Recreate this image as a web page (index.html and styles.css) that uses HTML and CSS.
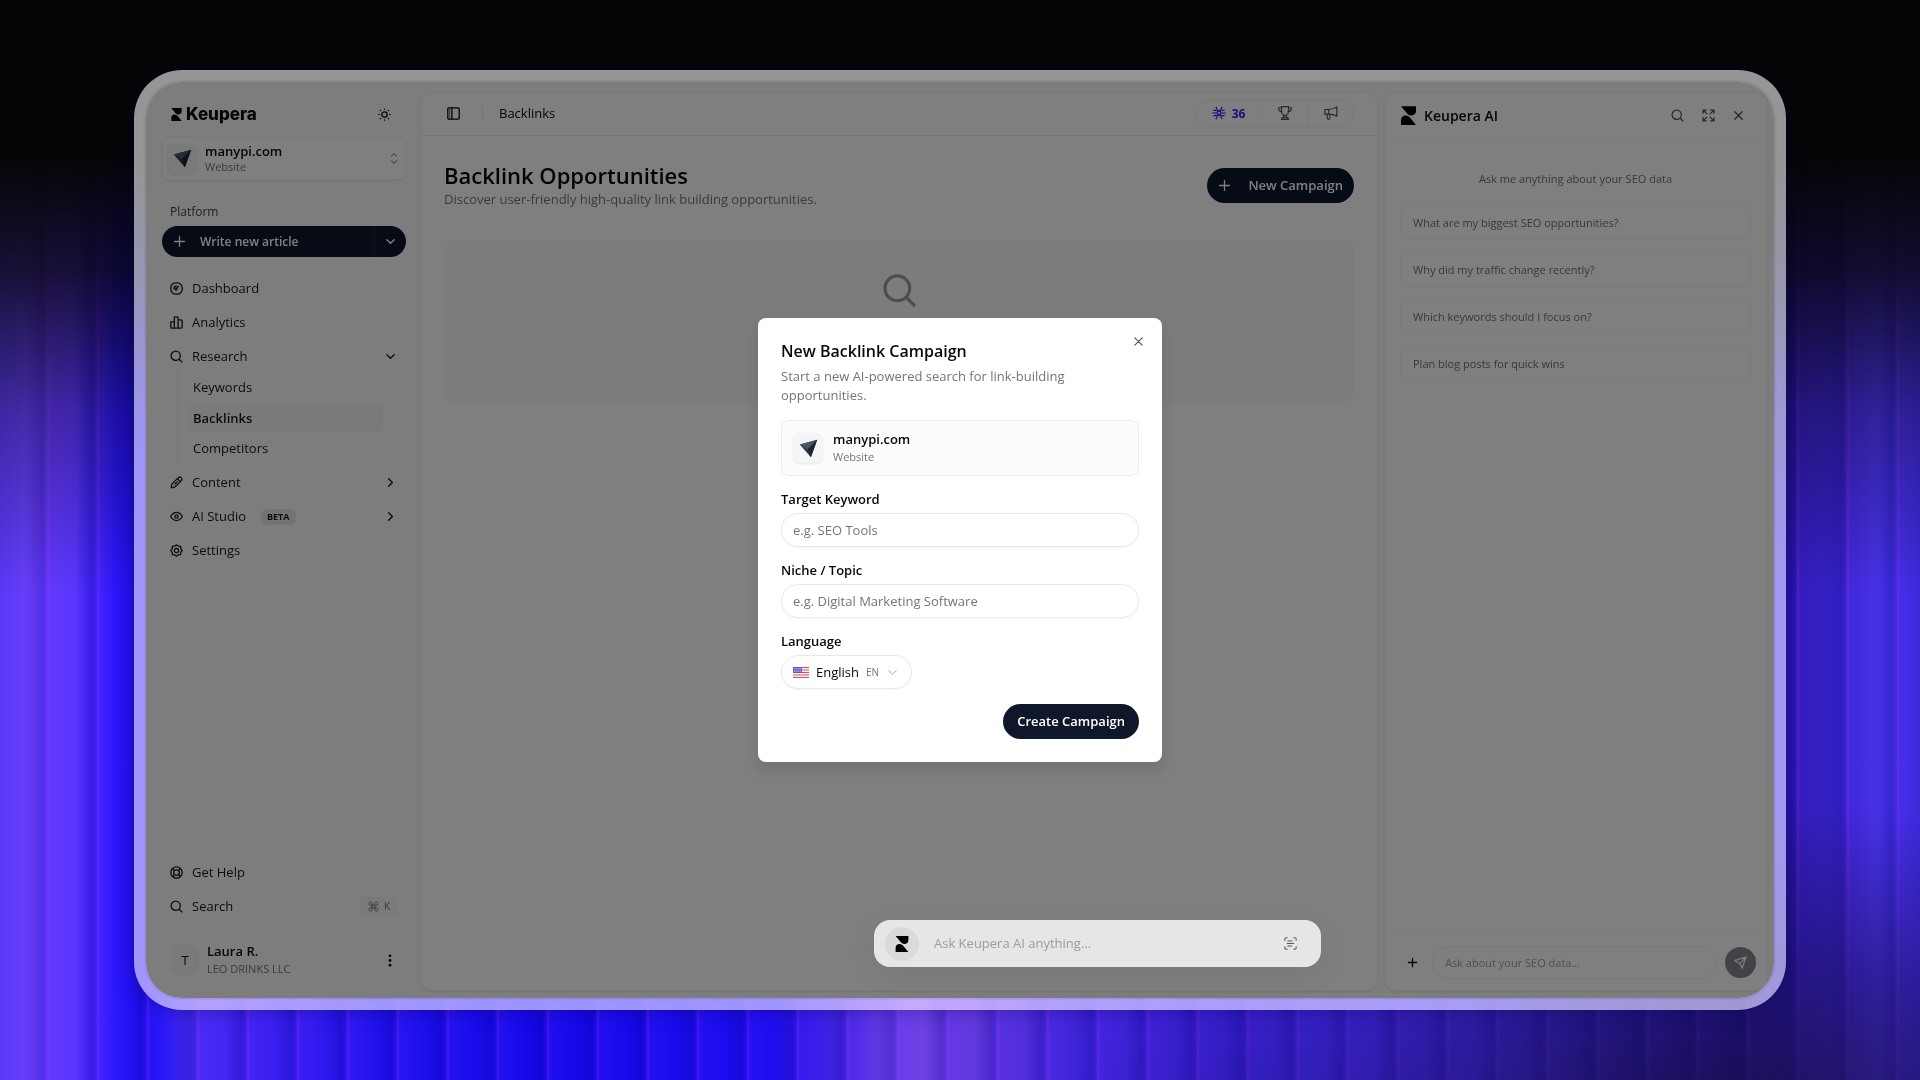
FILE: index.html
```html
<!DOCTYPE html>
<html lang="en">
<head>
    <meta charset="UTF-8">
    <meta name="viewport" content="width=device-width, initial-scale=1">
    <title>Backlinks – Keupera</title>
    <link rel="stylesheet" href="styles.css">
</head>
<body>

    <svg class="sprite" aria-hidden="true">
        <symbol id="mark" viewBox="0 0 16 20"><path d="M0 0H16V5C16 8 14 10 11 10C9 10 7 9 5 6ZM16 20H0V15C0 12 2 10 5 10C7 10 9 11 11 14Z" fill="currentColor"/></symbol>
        <symbol id="search" viewBox="0 0 24 24"><circle cx="10.5" cy="10.5" r="8.5"/><path d="M17 17l5 5"/></symbol>
        <symbol id="plus" viewBox="0 0 24 24"><path d="M12 3v18M3 12h18"/></symbol>
        <symbol id="close" viewBox="0 0 24 24"><path d="M4 4l16 16M20 4L4 20"/></symbol>
        <symbol id="down" viewBox="0 0 24 24"><path d="M4 8l8 8 8-8"/></symbol>
        <symbol id="right" viewBox="0 0 24 24"><path d="M8 4l8 8-8 8"/></symbol>
        <symbol id="plane" viewBox="0 0 24 24"><path d="M1 7L23 1 15 23Z" fill="#2f3a4a"/><path d="M1 7L23 1 11 13Z" fill="#4a5668"/><path d="M11 13L23 1 15 23Z" fill="#1c2533"/></symbol>
    </svg>

    <div class="frame">
        <div class="app">

            <aside class="sidebar">
                <div class="brand-row">
                    <a class="brand" href="#"><svg class="brand-mark"><use href="#mark"/></svg>Keupera</a>
                    <button class="icon-btn" aria-label="Theme">
                        <svg class="icon" viewBox="0 0 24 24"><circle cx="12" cy="12" r="5"/><path d="M12 1.500v.5M12 22v.5M1.500 12h.5M22 12h.5M4.500 4.500l.4.4M19.100 19.100l.4.4M4.500 19.500l.4-.4M19.100 4.900l.4-.4"/></svg>
                    </button>
                </div>

                <button class="site-switch">
                    <span class="site-icon"><svg><use href="#plane"/></svg></span>
                    <span class="site-text"><b>manypi.com</b><small>Website</small></span>
                    <svg class="switch-arrows" viewBox="0 0 24 40"><path d="M4 13l8-8 8 8M4 27l8 8 8-8"/></svg>
                </button>

                <div class="nav-title">Platform</div>
                <div class="write">
                    <button class="write-main"><svg class="icon"><use href="#plus"/></svg>Write new article</button>
                    <button class="write-more" aria-label="More"><svg class="icon-sm"><use href="#down"/></svg></button>
                </div>

                <nav class="nav">
                    <a href="#"><svg class="icon" viewBox="0 0 24 24"><rect x="1.500" y="1.500" width="21" height="21" rx="9"/><circle cx="11" cy="13" r="2"/><path d="M12 12l4-4M7 12a5 5 0 0 1 5-5"/></svg>Dashboard</a>
                    <a href="#"><svg class="icon" viewBox="0 0 24 24"><path d="M1.500 11H8v11.500H3.500q-2 0-2-2zM8 3.500q0-2 2-2h3q2 0 2 2v19H8zM15 7h5.500q2 0 2 2v11.500q0 2-2 2H15z"/></svg>Analytics</a>
                    <div class="nav-group">
                        <a href="#"><svg class="icon"><use href="#search"/></svg>Research<svg class="icon-sm arrow"><use href="#down"/></svg></a>
                        <div class="subnav">
                            <a href="#">Keywords</a>
                            <a class="active" href="#">Backlinks</a>
                            <a href="#">Competitors</a>
                        </div>
                    </div>
                    <a href="#"><svg class="icon" viewBox="0 0 24 24"><path d="M2 22l1.500-7L15 3.500q3-3 5.500-.5t.5 5.500L9.500 20zM13.500 5l5.500 5.500M9 15l4-4"/></svg>Content<svg class="icon-sm arrow"><use href="#right"/></svg></a>
                    <a href="#"><svg class="icon" viewBox="0 0 24 24"><path d="M1 12q5-7.500 11-7.500T23 12q-5 7.500-11 7.500T1 12z"/><circle cx="12" cy="12" r="3"/></svg>AI Studio<span class="badge">BETA</span><svg class="icon-sm arrow"><use href="#right"/></svg></a>
                    <a href="#"><svg class="icon" viewBox="0 0 24 24"><path d="M12 1.500L15.500 4l4 .5.5 4 2.500 3.500L20 15.500l-.5 4-4 .5-3.500 2.500L8.500 20l-4-.5-.5-4L1.500 12 4 8.500l.5-4 4-.5z"/><circle cx="12" cy="12" r="4"/></svg>Settings</a>
                </nav>

                <nav class="nav nav-bottom">
                    <a href="#"><svg class="icon" viewBox="0 0 24 24"><circle cx="12" cy="12" r="10.500"/><rect x="7" y="7" width="10" height="10" rx="4"/><path d="M5 5l3.500 3.500M19 5l-3.500 3.500M5 19l3.500-3.500M19 19l-3.500-3.500"/></svg>Get Help</a>
                    <a href="#"><svg class="icon"><use href="#search"/></svg>Search<kbd><svg viewBox="0 0 24 24"><path d="M9 9h6v6H9zM9 9H5.500A3.500 3.500 0 1 1 9 5.500zM15 9V5.500A3.500 3.500 0 1 1 18.500 9zM9 15v3.500A3.500 3.500 0 1 1 5.500 15zM15 15h3.500a3.500 3.500 0 1 1-3.500 3.500z"/></svg>K</kbd></a>
                </nav>

                <div class="user">
                    <span class="avatar">T</span>
                    <span class="site-text"><b>Laura R.</b><small>LEO DRINKS LLC</small></span>
                    <button class="icon-btn" aria-label="Account menu">
                        <svg class="dots" viewBox="0 0 4 14"><circle cx="2" cy="2" r="1.500"/><circle cx="2" cy="7" r="1.500"/><circle cx="2" cy="12" r="1.500"/></svg>
                    </button>
                </div>
            </aside>

            <main class="panel main">
                <header class="topbar">
                    <button class="icon-btn" aria-label="Toggle sidebar"><svg class="icon" viewBox="0 0 24 24"><rect x="1.500" y="1.500" width="21" height="21" rx="2"/><path d="M9 2v20"/><path d="M5 4v16" stroke-width="1"/></svg></button>
                    <span class="sep"></span>
                    <span class="crumb">Backlinks</span>
                    <div class="stats">
                        <button class="credits"><svg class="icon" viewBox="0 0 24 24"><circle cx="12" cy="12" r="3"/><path d="M12 9V7M12 17v-2M1 12h8M15 12h8M10 9L7 2M14 9l3-7M10 15l-3 7M14 15l3 7M3 7l4 1M21 7l-4 1M3 17l4-1M21 17l-4-1"/></svg>36</button>
                        <button aria-label="Achievements"><svg class="icon" viewBox="0 0 24 24"><path d="M6 1h12v8c0 4-3 7-6 7s-6-3-6-7zM6 3H1c0 5 2 7 6 7M18 3h5c0 5-2 7-6 7M10 16l-1 4M14 16l1 4M6 23c0-2 1-3 3-3h6c2 0 3 1 3 3z"/></svg></button>
                        <button aria-label="News"><svg class="icon" viewBox="0 0 24 24"><path d="M1.500 6H8c5 0 10-2 14-4.500v16C18 15 13 14 8 14H1.500zM8 6v8M5 14l1 7q0 2 2 2t2-2v-7"/></svg></button>
                    </div>
                </header>
                <section class="content">
                    <div class="page-head">
                        <div>
                            <h1>Backlink Opportunities</h1>
                            <p>Discover user-friendly high-quality link building opportunities.</p>
                        </div>
                        <button class="btn"><svg class="icon"><use href="#plus"/></svg>New Campaign</button>
                    </div>
                    <div class="empty"><svg><use href="#search"/></svg></div>
                </section>
            </main>

            <aside class="panel chat">
                <header class="chat-head">
                    <svg class="chat-mark"><use href="#mark"/></svg>
                    <h2>Keupera AI</h2>
                    <button class="icon-btn" aria-label="Search chats"><svg class="icon"><use href="#search"/></svg></button>
                    <button class="icon-btn" aria-label="Expand"><svg class="icon" viewBox="0 0 24 24"><path d="M2 8V2h6M16 2h6v6M22 16v6h-6M8 22H2v-6M3 3l6 6M21 3l-6 6M21 21l-6-6M3 21l6-6"/></svg></button>
                    <button class="icon-btn" aria-label="Close chat"><svg class="icon-sm"><use href="#close"/></svg></button>
                </header>
                <div class="chat-body">
                    <p>Ask me anything about your SEO data</p>
                    <button>What are my biggest SEO opportunities?</button>
                    <button>Why did my traffic change recently?</button>
                    <button>Which keywords should I focus on?</button>
                    <button>Plan blog posts for quick wins</button>
                </div>
                <form class="chat-form">
                    <button type="button" class="icon-btn" aria-label="Attach"><svg class="icon-sm"><use href="#plus"/></svg></button>
                    <input type="text" aria-label="Ask about your SEO data" placeholder="Ask about your SEO data...">
                    <button type="button" class="send" aria-label="Send"><svg class="icon" viewBox="0 0 24 24"><path d="M1.500 8.500L22.500 1.500 15 22.500 11 14zM11 14L22 2"/></svg></button>
                </form>
            </aside>

            <div class="overlay"></div>

            <form class="askbar">
                <span class="ask-logo"><svg><use href="#mark"/></svg></span>
                <input type="text" aria-label="Ask Keupera AI" placeholder="Ask Keupera AI anything...">
                <button type="button" class="icon-btn" aria-label="Scan page"><svg class="icon" viewBox="0 0 24 24"><path d="M1.500 6V4q0-2.500 2.500-2.500h2M18 1.500h2q2.500 0 2.500 2.500v2M22.500 18v2q0 2.500-2.500 2.500h-2M6 22.500H4Q1.500 22.500 1.500 20v-2M7 7.500h8M6 12h12M7 16.500h7"/></svg></button>
            </form>
        </div>
    </div>

    <div class="modal" role="dialog" aria-labelledby="modal-title">
        <button class="icon-btn modal-close" aria-label="Close"><svg class="icon-sm"><use href="#close"/></svg></button>
        <h2 id="modal-title">New Backlink Campaign</h2>
        <p>Start a new AI-powered search for link-building opportunities.</p>

        <div class="site-card">
            <span class="site-icon"><svg><use href="#plane"/></svg></span>
            <span class="site-text"><b>manypi.com</b><small>Website</small></span>
        </div>

        <form class="modal-form">
            <label for="keyword">Target Keyword</label>
            <input type="text" id="keyword" name="keyword" placeholder="e.g. SEO Tools">

            <label for="niche">Niche / Topic</label>
            <input type="text" id="niche" name="niche" placeholder="e.g. Digital Marketing Software">

            <label for="language">Language</label>
            <div class="lang">
                <svg class="flag" viewBox="0 0 16 11"><rect width="16" height="11" fill="#f4f4f8"/><path d="M0 .5h16M0 3h16M0 5.500h16M0 8h16M0 10.500h16" stroke="#e8505b" stroke-width="1.200"/><rect width="9" height="6" fill="#5a5ac8"/><path d="M1 1.500h7M1 3h7M1 4.500h7" stroke="#c8c8f0" stroke-width=".6" stroke-dasharray="1 1"/></svg>
                <select id="language" name="language"><option>English</option></select>
                <small>EN</small>
                <svg class="icon-sm"><use href="#down"/></svg>
            </div>

            <button type="button" class="btn">Create Campaign</button>
        </form>
    </div>

</body>
</html>
```
FILE: styles.css
```css
* {
    box-sizing: border-box;
}

body {
    margin: 0;
    height: 100vh;
    padding: 70px 134px;
    display: flex;
    overflow: hidden;
    font-family: "Open Sans", "Segoe UI", sans-serif;
    font-size: 13px;
    line-height: 19px;
    color: #09090b;
    background:
        linear-gradient(to bottom, #050505 0, #050505 14%, rgba(5, 5, 5, 0.8) 25%, rgba(5, 5, 5, 0.35) 38%, transparent 55%),
        radial-gradient(ellipse 34% 30% at 90% 104%, rgba(24, 14, 60, 0.8) 0, rgba(24, 14, 80, 0.5) 50%, transparent),
        repeating-linear-gradient(to right,
            rgba(80, 40, 255, 0.2) 0, rgba(60, 20, 255, 0) 25px, rgba(10, 0, 150, 0.25) 42px,
            rgba(60, 20, 220, 0.25) 46px, rgba(150, 50, 255, 0.35) 48px, rgba(80, 40, 255, 0.2) 50px),
        linear-gradient(to right, #5c3cf4 0, #6a40ff 2%, #5a34ff 4%, #2a14fa 6%, #1c10f4 8%, #4a2cf4 10%,
            #3c20f0 14%, #2010ee 20%, #1408ec 28%, #1c0cf0 40%, #4a28e4 44%, #7044e6 47%, #6038dc 51%, #4024d8 56%,
            #3a20dc 64%, #4028f4 70%, #402af4 77%, #2c1cc0 84%, #20129a 91%, #3420c0 95%, #4a34ec 98%, #3c2ad8 100%);
}

h1, h2, p {
    margin: 0;
}

a {
    color: inherit;
    text-decoration: none;
}

button, input, select {
    font: inherit;
    color: inherit;
    border: none;
    background: none;
    padding: 0;
    outline: none;
}

button {
    cursor: pointer;
}

svg {
    display: block;
    flex: none;
    fill: none;
    stroke: currentColor;
    stroke-width: 2;
    stroke-linecap: round;
    stroke-linejoin: round;
}

.sprite {
    position: absolute;
    width: 0;
    height: 0;
}

.icon {
    width: 13px;
    height: 13px;
    stroke-width: 2.4;
}

.icon-sm {
    width: 11px;
    height: 11px;
    stroke-width: 3;
}

.icon-btn {
    display: flex;
    align-items: center;
    justify-content: center;
}

/* window */

.frame {
    flex: 1;
    display: flex;
    padding: 12px;
    border-radius: 48px;
    background: rgba(255, 255, 255, 0.58);
    backdrop-filter: blur(8px) saturate(160%);
    box-shadow: 0 0 20px rgba(5, 0, 60, 0.35);
}

.app {
    position: relative;
    flex: 1;
    display: flex;
    gap: 8px;
    padding: 11px 7px 8px 0;
    border-radius: 36px;
    background: #fafafa;
    box-shadow: 0 0 3px rgba(0, 0, 0, 0.25);
    overflow: hidden;
}

.overlay {
    position: absolute;
    inset: 0;
    background: rgba(0, 0, 0, 0.5);
}

.panel {
    display: flex;
    flex-direction: column;
    background: #fff;
    border-radius: 12px;
    box-shadow: 0 0 0 1px #f3f3f5, 0 1px 3px rgba(0, 0, 0, 0.15);
}

/* sidebar */

.sidebar {
    width: 267px;
    display: flex;
    flex-direction: column;
    padding: 11px 7px 13px 16px;
}

.brand-row {
    display: flex;
    align-items: center;
    justify-content: space-between;
    padding: 0 15px 0 9px;
    height: 20px;
}

.brand {
    display: flex;
    align-items: center;
    gap: 4px;
    font-family: Inter, sans-serif;
    font-size: 17px;
    font-weight: 800;
}

.brand-mark {
    width: 11px;
    height: 13px;
    stroke: none;
}

.site-switch {
    display: flex;
    align-items: center;
    gap: 8px;
    height: 43px;
    margin-top: 13px;
    padding: 0 8px 0 5px;
    border-radius: 8px;
    background: #fff;
    box-shadow: inset 0 0 0 1px #f3f3f5, 0 1px 2px rgba(0, 0, 0, 0.08);
    text-align: left;
}

.switch-arrows {
    width: 8px;
    height: 13px;
    stroke-width: 3;
    color: #52525b;
}

.site-icon {
    display: flex;
    align-items: center;
    justify-content: center;
    width: 30px;
    height: 30px;
    border-radius: 8px;
    background: #f4f5f7;
    box-shadow: 0 1px 3px rgba(0, 0, 0, 0.1);
}

.site-icon svg {
    width: 19px;
    height: 19px;
    stroke: none;
}

.site-text {
    flex: 1;
    display: flex;
    flex-direction: column;
    line-height: 16px;
}

.site-text b {
    font-weight: 600;
}

.site-text small {
    font-size: 11px;
    color: #71757f;
}

.nav-title {
    margin-top: 22px;
    padding-left: 8px;
    font-size: 12px;
    font-weight: 500;
    color: #3f3f46;
}

.write {
    display: flex;
    height: 31px;
    margin-top: 5px;
    border-radius: 16px;
    background: #0f172a;
    color: #fff;
}

.write-main {
    flex: 1;
    display: flex;
    align-items: center;
    gap: 14px;
    padding-left: 11px;
    font-size: 12px;
    font-weight: 600;
}

.write-more {
    display: flex;
    align-items: center;
    justify-content: center;
    width: 32px;
    border-left: 1px solid #1d273a;
}

.nav {
    display: flex;
    flex-direction: column;
    gap: 3px;
    margin-top: 16px;
}

.nav a {
    display: flex;
    align-items: center;
    gap: 9px;
    height: 31px;
    padding: 0 10px 0 8px;
    color: #18181b;
}

.arrow {
    margin-left: auto;
}

.subnav {
    margin-left: 15px;
    padding: 0 23px 0 11px;
    border-left: 1px solid #e9e9ee;
}

.nav .subnav a {
    padding: 0 4px;
}

.nav .subnav .active {
    height: 28px;
    margin: 1px 0;
    border-radius: 6px;
    background: #f4f4f5;
    font-weight: 600;
}

.badge {
    margin-left: 6px;
    padding: 0 6px;
    border-radius: 6px;
    background: #e6e6ea;
    font-size: 9px;
    font-weight: 700;
    line-height: 16px;
}

.nav-bottom {
    margin-top: auto;
}

kbd {
    display: flex;
    align-items: center;
    gap: 5px;
    height: 19px;
    margin-left: auto;
    margin-right: -2px;
    padding: 0 8px;
    border-radius: 4px;
    background: #f4f4f5;
    font-family: inherit;
    font-size: 10px;
    color: #71757f;
}

kbd svg {
    width: 11px;
    height: 11px;
}

.user {
    display: flex;
    align-items: center;
    gap: 8px;
    margin-top: 21px;
    padding: 0 14px 0 9px;
}

.user .site-text {
    line-height: 17px;
}

.avatar {
    width: 28px;
    line-height: 30px;
    border-radius: 8px;
    background: #f4f4f5;
    text-align: center;
}

.dots {
    width: 4px;
    height: 13px;
    fill: currentColor;
    stroke: none;
}

/* main */

.main {
    flex: 1;
}

.topbar {
    display: flex;
    align-items: center;
    height: 43px;
    padding: 0 23px 2px 26px;
    border-bottom: 1px solid #ececef;
}

.sep {
    width: 1px;
    height: 14px;
    margin: 0 16px 0 22px;
    background: #e9e9ee;
}

.stats {
    display: flex;
    height: 27px;
    margin-left: auto;
    border: 1px solid #f0f0f3;
    border-radius: 14px;
}

.stats button {
    display: flex;
    align-items: center;
    justify-content: center;
    gap: 6px;
    width: 46px;
    color: #52525b;
}

.stats button + button {
    border-left: 1px solid #f0f0f3;
}

.stats .icon {
    width: 14px;
    height: 14px;
    stroke-width: 2;
}

.stats .credits {
    width: 65px;
    font-size: 12px;
    font-weight: 700;
    color: #3020f0;
}

.content {
    padding: 25px 23px 0 23px;
}

.page-head {
    display: flex;
    align-items: center;
    justify-content: space-between;
    padding-bottom: 31px;
}

.page-head .btn {
    padding: 0 11px;
}

h1 {
    font-size: 22px;
    line-height: 28px;
    font-weight: 600;
}

.page-head p {
    margin-top: 1px;
    color: #71757f;
}

.btn {
    display: flex;
    align-items: center;
    gap: 17px;
    height: 35px;
    padding: 0 12px;
    border-radius: 18px;
    background: #0f172a;
    color: #fff;
    font-weight: 600;
}

.empty {
    display: flex;
    justify-content: center;
    height: 162px;
    padding-top: 33px;
    border-radius: 10px;
    background: #f6faf8;
    color: #9a9aa0;
}

.empty svg {
    width: 35px;
    height: 35px;
    stroke-width: 2.2;
}

/* chat */

.chat {
    width: 382px;
}

.chat-head {
    display: flex;
    align-items: center;
    gap: 18px;
    height: 46px;
    padding: 0 23px 0 16px;
    border-bottom: 1px solid #f7f7f9;
    color: #52525b;
}

.chat-mark {
    width: 15px;
    height: 19px;
    margin-right: -10px;
    stroke: none;
    color: #000;
}

.chat-head h2 {
    margin-right: auto;
    font-size: 14px;
    font-weight: 600;
    color: #09090b;
}

.chat-body {
    flex: 1;
    display: flex;
    flex-direction: column;
    gap: 12px;
    padding: 30px 16px 0 15px;
    font-size: 11px;
    color: #71717a;
}

.chat-body p {
    margin-bottom: 5px;
    text-align: center;
}

.chat-body button {
    height: 35px;
    padding: 0 12px;
    border: 1px solid #f5f5f7;
    border-radius: 8px;
    text-align: left;
}

.chat-form {
    display: flex;
    align-items: center;
    gap: 8px;
    padding: 12px 11px 11px 15px;
    border-top: 1px solid #f8f8fa;
}

.chat-form .icon-btn {
    width: 24px;
}

.chat-form input {
    flex: 1;
    min-width: 0;
    height: 33px;
    padding: 0 12px;
    border: 1px solid #f0f0f3;
    border-radius: 17px;
    font-size: 11px;
}

.chat-form input::placeholder {
    color: #a1a1aa;
}

.send {
    display: flex;
    align-items: center;
    justify-content: center;
    width: 31px;
    height: 31px;
    border-radius: 50%;
    background: #87878f;
    color: #f4f4f5;
}

/* ask bar floats over the dimmed window */

.askbar {
    position: absolute;
    right: 453px;
    bottom: 31px;
    display: flex;
    align-items: center;
    gap: 15px;
    width: 447px;
    height: 47px;
    padding: 0 24px 0 11px;
    border-radius: 16px;
    background: #e6e6e6;
    box-shadow: 0 8px 30px rgba(0, 0, 0, 0.06);
    color: #52566a;
}

.askbar .icon {
    stroke-width: 2;
}

.ask-logo {
    display: flex;
    align-items: center;
    justify-content: center;
    width: 34px;
    height: 34px;
    border-radius: 50%;
    background: #dadadd;
    color: #000;
}

.ask-logo svg {
    width: 14px;
    height: 16px;
    stroke: none;
}

.askbar input {
    flex: 1;
}

.askbar input::placeholder {
    color: #9a9aa2;
}

/* modal */

.modal {
    position: fixed;
    top: 50%;
    left: 50%;
    width: 404px;
    padding: 23px;
    transform: translate(-50%, -50%);
    border-radius: 8px;
    background: #fff;
    box-shadow: 0 8px 16px rgba(0, 0, 0, 0.12);
}

.modal-close {
    position: absolute;
    top: 18px;
    right: 18px;
    color: #52525b;
}

.modal-close .icon-sm {
    stroke-width: 2.5;
}

.modal h2 {
    font-size: 16px;
    line-height: 20px;
    font-weight: 600;
}

.modal p {
    margin-top: 6px;
    padding-right: 50px;
    color: #71757f;
}

.site-card {
    display: flex;
    align-items: center;
    gap: 10px;
    height: 56px;
    margin: 15px 0 14px;
    padding: 0 11px;
    border: 1px solid #ececef;
    border-radius: 8px;
    background: #fcfcfd;
}

.site-card .site-text {
    line-height: 18px;
}

.modal-form {
    display: flex;
    flex-direction: column;
}

.modal-form label {
    margin-bottom: 4px;
    font-weight: 600;
}

.modal-form input, .lang {
    height: 34px;
    margin-bottom: 14px;
    padding: 0 11px;
    border: 1px solid #e9e9ec;
    border-radius: 17px;
    box-shadow: 0 1px 2px rgba(0, 0, 0, 0.04);
}

.modal-form input::placeholder {
    color: #71757f;
}

.lang {
    align-self: flex-start;
    display: flex;
    align-items: center;
    width: 131px;
    padding: 0 13px 0 11px;
}

.flag {
    width: 16px;
    height: 11px;
    margin-right: 7px;
    stroke: none;
}

.lang select {
    appearance: none;
    field-sizing: content;
}

.lang small {
    margin: 0 auto 0 7px;
    font-size: 10px;
    color: #71757f;
}

.lang .icon-sm {
    stroke-width: 2;
    color: #9a9aa2;
}

.modal-form .btn {
    align-self: flex-end;
    margin-top: 1px;
    padding: 0 14px;
}
```
